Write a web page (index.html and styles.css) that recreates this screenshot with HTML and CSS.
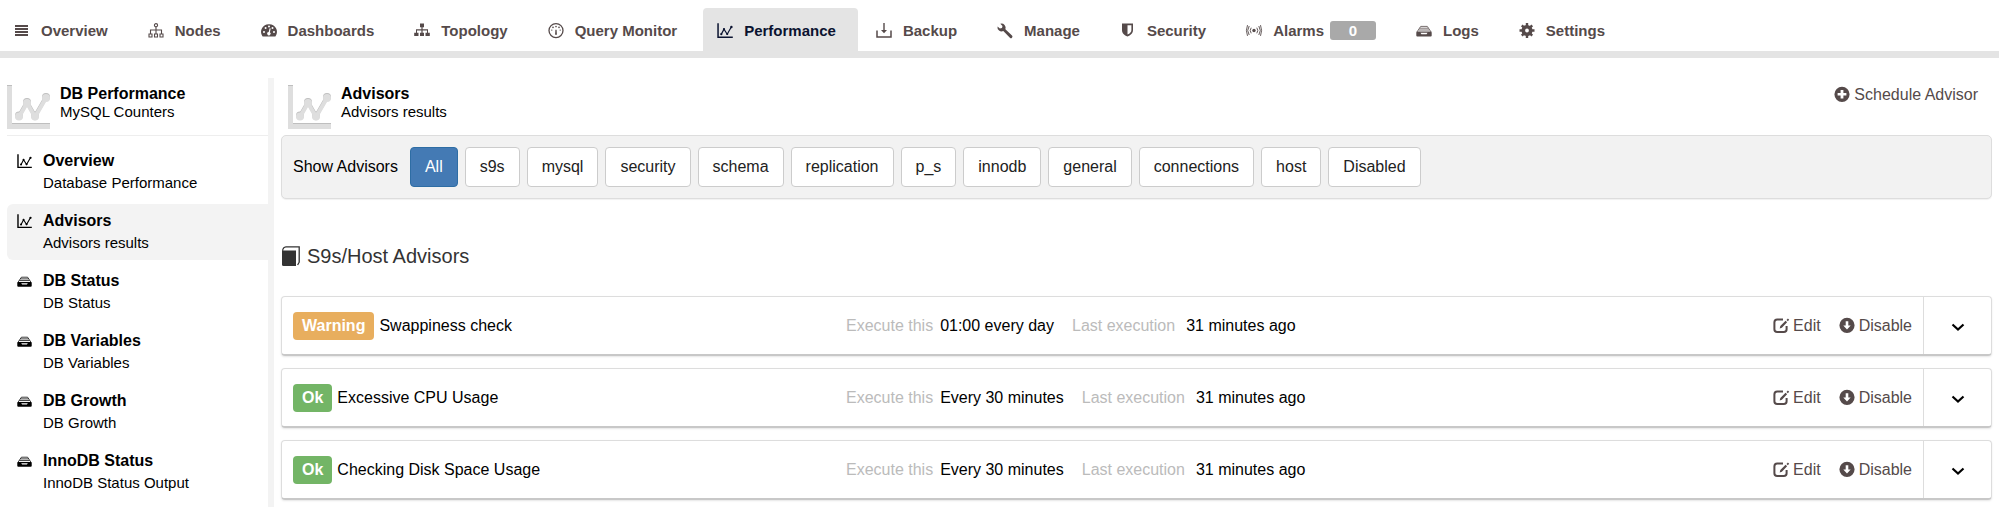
FILE: index.html
```html
<!DOCTYPE html>
<html lang="en">
<head>
    <meta charset="UTF-8">
    <meta name="viewport" content="width=device-width, initial-scale=1.0">
    <title>DB Performance - Advisors</title>
    <link rel="stylesheet" href="styles.css">
</head>
<body>
    <!-- Icon set -->
    <svg class="sprite" aria-hidden="true">
        <symbol id="i-bars" viewBox="0 0 16 16"><path d="M1 2h13v2H1zM1 5h13v2H1zM1 8h13v2H1zM1 11h13v2H1z"/></symbol>
        <symbol id="i-nodes" viewBox="0 0 16 16"><g fill="none" stroke="currentColor" stroke-width="1.1"><circle cx="8" cy="2.2" r="1.6"/><path d="M8 3.8v7M2.5 10.500V7h11v3.500M1 11h3v3H1zM6.500 11h3v3h-3zM12 11h3v3h-3z"/></g></symbol>
        <symbol id="i-dash" viewBox="0 0 16 16"><path fill-rule="evenodd" d="M8 1.200a7.600 7.600 0 0 1 6.700 11.700q-.3.500-.9.500H2.200q-.6 0-.9-.5A7.600 7.600 0 0 1 8 1.200zM3 7.900a1 1 0 1 0 0 2 1 1 0 0 0 0-2zM4.600 4.100a1 1 0 1 0 0 2 1 1 0 0 0 0-2zM8 2.600a1 1 0 1 0 0 2 1 1 0 0 0 0-2zM11.500 4.100a1 1 0 1 0 0 2 1 1 0 0 0 0-2zM13 7.900a1 1 0 1 0 0 2 1 1 0 0 0 0-2zM8.600 5.200 7.700 9a1.700 1.700 0 1 0 1.200.3l.8-3.800z"/></symbol>
        <symbol id="i-topology" viewBox="0 0 16 16"><path d="M6 .5h4v3.800H8.600v2H14v3.400h1.800V13H11.500V9.700H13V7.400H8.600v2.300H10V13H6V9.700h1.400V7.400H3v2.300h1.500V13H.2V9.700H2V6.300h5.400v-2H6z"/></symbol>
        <symbol id="i-query" viewBox="0 0 16 16"><circle cx="8" cy="7.600" r="7" fill="none" stroke="currentColor" stroke-width="1.300"/><path d="M7.400 6.800h1.200l.3 4.200a.9.9 0 0 1-1.800 0z"/><circle cx="8" cy="3.600" r=".8"/><circle cx="5" cy="4.400" r=".8"/><circle cx="11" cy="4.400" r=".8"/><circle cx="3.800" cy="7.100" r=".7"/><circle cx="12.200" cy="7.100" r=".7"/></symbol>
        <symbol id="i-chart" viewBox="0 0 16 16"><path d="M.3.200h1.500v13.300h14V15H.3z"/><path d="M4.200 11.400 7 6.200l3.200 5L14.300 4" fill="none" stroke="currentColor" stroke-width="1.200"/><circle cx="4.300" cy="11.200" r="1.100"/><circle cx="7" cy="6.200" r="1.100"/><circle cx="10.200" cy="11" r="1.100"/><circle cx="14.400" cy="4" r="1.200"/></symbol>
        <symbol id="i-chart-big" viewBox="0 0 43 44">
            <g fill="#bfbfbf" stroke="#bfbfbf"><path d="M0 0h5v38h38v6H0z" stroke="none"/><path d="M12 31 20 17l8 14L39 12" fill="none" stroke-width="4"/><g stroke="none"><circle cx="12" cy="30.500" r="4"/><circle cx="20" cy="17" r="4"/><circle cx="28" cy="30.500" r="4"/><circle cx="39" cy="12" r="4"/></g></g>
            <g fill="#dedede" stroke="#dedede"><path d="M0 1h5v38h38v5H0z" stroke="none"/><path d="M12 32 20 18l8 14L39 13" fill="none" stroke-width="4"/><g stroke="none"><circle cx="12" cy="31.500" r="4"/><circle cx="20" cy="18" r="4"/><circle cx="28" cy="31.500" r="4"/><circle cx="39" cy="13" r="4"/></g></g>
        </symbol>
        <symbol id="i-backup" viewBox="0 0 16 16"><path d="M1 7.500V14h14V7.500" fill="none" stroke="currentColor" stroke-width="1.500"/><path d="M7.300 0h1.400v7H11l-3 3.300L5 7h2.300z"/></symbol>
        <symbol id="i-wrench" viewBox="0 0 16 16"><path d="M.5 3.400 2.900 5.600 5 5 5.500 3 3.300.7A4.200 4.200 0 0 1 8.400 6.200l6.600 6.400a1.400 1.400 0 0 1-2.100 2.100L6.300 8A4.200 4.200 0 0 1 .5 3.400z"/></symbol>
        <symbol id="i-shield" viewBox="0 0 16 16"><path fill-rule="evenodd" d="M2 .500h11V7c0 3.500-2.500 5.300-5.500 6.500C4.300 12.300 2 10.500 2 7zM7.500 2.200v9.400c2.600-1.300 3.900-2.500 3.900-4.600V2.200z"/></symbol>
        <symbol id="i-alarm" viewBox="0 0 16 16"><circle cx="8" cy="7.500" r="1.700"/><path d="M5.200 4.700q-2 2.800 0 5.600M10.800 4.700q2 2.800 0 5.600M3.200 3q-3 4.500 0 9M12.800 3q3 4.500 0 9M1.500 2.100q-2.200 5.400 0 10.800M14.500 2.100q2.200 5.400 0 10.800" fill="none" stroke="currentColor" stroke-width=".9"/></symbol>
        <symbol id="i-drawer" viewBox="0 0 16 16"><path fill-rule="evenodd" d="M.3 9.700Q.3 8.900.9 8.500h14.200q.6.400.6 1.200V12.500q0 1-1 1H1.300q-1 0-1-1zM4.500 9.800l.9 1.500h5.200l.9-1.500z"/><path d="M4.700 3.400h6.600M3.700 5.200h8.600M2.600 7h10.800M4.700 3.400 1 8.900M11.300 3.400 15 8.900" fill="none" stroke="currentColor" stroke-width=".8"/></symbol>
        <symbol id="i-gear" viewBox="0 0 16 16"><circle cx="8" cy="7.500" r="3.700" fill="none" stroke="currentColor" stroke-width="3.600"/><path d="M8 0v3M8 12v3M.5 7.500h3M12.500 7.500h3M2.800 2.300l2 2M11.200 10.700l2 2M2.800 12.700l2-2M11.200 4.300l2-2" stroke="currentColor" stroke-width="2.400"/></symbol>
        <symbol id="i-plus" viewBox="0 0 16 16"><path fill-rule="evenodd" d="M8-.3a7.600 7.600 0 1 1 0 15.200A7.600 7.600 0 0 1 8-.3zM6.600 3v3h-3v2.600h3v3h2.800v-3h3V6h-3V3z"/></symbol>
        <symbol id="i-down" viewBox="0 0 16 16"><path fill-rule="evenodd" d="M8-.3a7.600 7.600 0 1 1 0 15.200A7.600 7.600 0 0 1 8-.3zM6.700 3.300v4.200H4.300L8 11.600l3.700-4.100H9.300V3.300z"/></symbol>
        <symbol id="i-edit" viewBox="0 0 16 16"><path d="M10 1.600H4.200Q1.400 1.600 1.400 4.400v6.800q0 2.800 2.800 2.800h6.600q2.800 0 2.800-2.800V8" fill="none" stroke="currentColor" stroke-width="2"/><path d="M6.700 10.600l.6-2.500 5.300-5.300 1.500 1.500L8.900 9.700zM13.500 1.900 14.900.4l1.300 1.400-1.400 1.400z"/></symbol>
        <symbol id="i-chevron" viewBox="0 0 16 16"><path d="M2.500 6.500 8 11.500l5.500-5" fill="none" stroke="currentColor" stroke-width="2.200"/></symbol>
        <symbol id="i-book" viewBox="0 0 20 20"><path d="M1 4.500h14V20H2.500Q1 20 1 18.500z"/><path d="M1.600 4.800Q2 1.200 5 .9h13.200v15.300L16.600 19" fill="none" stroke="currentColor" stroke-width="1.300"/><path d="M3.500 2.600h13.300V4H2.500z" fill="#fff"/></symbol>
    </svg>

    <nav class="top-nav">
        <a class="nav-item" href="#"><svg class="icon"><use href="#i-bars"/></svg>Overview</a>
        <a class="nav-item" href="#"><svg class="icon"><use href="#i-nodes"/></svg>Nodes</a>
        <a class="nav-item" href="#"><svg class="icon"><use href="#i-dash"/></svg>Dashboards</a>
        <a class="nav-item" href="#"><svg class="icon"><use href="#i-topology"/></svg>Topology</a>
        <a class="nav-item" href="#"><svg class="icon"><use href="#i-query"/></svg>Query Monitor</a>
        <a class="nav-item active" href="#"><svg class="icon"><use href="#i-chart"/></svg>Performance</a>
        <a class="nav-item" href="#"><svg class="icon"><use href="#i-backup"/></svg>Backup</a>
        <a class="nav-item" href="#"><svg class="icon"><use href="#i-wrench"/></svg>Manage</a>
        <a class="nav-item" href="#"><svg class="icon"><use href="#i-shield"/></svg>Security</a>
        <a class="nav-item" href="#"><svg class="icon"><use href="#i-alarm"/></svg>Alarms<span class="count">0</span></a>
        <a class="nav-item" href="#"><svg class="icon"><use href="#i-drawer"/></svg>Logs</a>
        <a class="nav-item" href="#"><svg class="icon"><use href="#i-gear"/></svg>Settings</a>
    </nav>

    <div class="page">
        <aside class="sidebar">
            <div class="section-header">
                <svg class="header-icon"><use href="#i-chart-big"/></svg>
                <div>
                    <div class="section-title">DB Performance</div>
                    <div class="section-sub">MySQL Counters</div>
                </div>
            </div>

            <div class="side-menu">
                <a class="side-item" href="#">
                    <svg class="side-icon"><use href="#i-chart"/></svg>
                    <div>
                        <div class="side-title">Overview</div>
                        <div class="side-sub">Database Performance</div>
                    </div>
                </a>
                <a class="side-item active" href="#">
                    <svg class="side-icon"><use href="#i-chart"/></svg>
                    <div>
                        <div class="side-title">Advisors</div>
                        <div class="side-sub">Advisors results</div>
                    </div>
                </a>
                <a class="side-item" href="#">
                    <svg class="side-icon"><use href="#i-drawer"/></svg>
                    <div>
                        <div class="side-title">DB Status</div>
                        <div class="side-sub">DB Status</div>
                    </div>
                </a>
                <a class="side-item" href="#">
                    <svg class="side-icon"><use href="#i-drawer"/></svg>
                    <div>
                        <div class="side-title">DB Variables</div>
                        <div class="side-sub">DB Variables</div>
                    </div>
                </a>
                <a class="side-item" href="#">
                    <svg class="side-icon"><use href="#i-drawer"/></svg>
                    <div>
                        <div class="side-title">DB Growth</div>
                        <div class="side-sub">DB Growth</div>
                    </div>
                </a>
                <a class="side-item" href="#">
                    <svg class="side-icon"><use href="#i-drawer"/></svg>
                    <div>
                        <div class="side-title">InnoDB Status</div>
                        <div class="side-sub">InnoDB Status Output</div>
                    </div>
                </a>
            </div>
        </aside>

        <main class="content">
            <div class="section-header">
                <svg class="header-icon"><use href="#i-chart-big"/></svg>
                <div>
                    <div class="section-title">Advisors</div>
                    <div class="section-sub">Advisors results</div>
                </div>
                <button class="link-btn schedule"><svg class="icon"><use href="#i-plus"/></svg>Schedule Advisor</button>
            </div>

            <div class="filters">
                <span class="filter-label">Show Advisors</span>
                <button class="filter-btn selected">All</button>
                <button class="filter-btn">s9s</button>
                <button class="filter-btn">mysql</button>
                <button class="filter-btn">security</button>
                <button class="filter-btn">schema</button>
                <button class="filter-btn">replication</button>
                <button class="filter-btn">p_s</button>
                <button class="filter-btn">innodb</button>
                <button class="filter-btn">general</button>
                <button class="filter-btn">connections</button>
                <button class="filter-btn">host</button>
                <button class="filter-btn">Disabled</button>
            </div>

            <h2 class="group-title"><svg class="book-icon"><use href="#i-book"/></svg>S9s/Host Advisors</h2>

            <div class="advisor">
                <div class="advisor-name"><span class="badge warning">Warning</span>Swappiness check</div>
                <div class="advisor-info">
                    <span class="muted">Execute this</span><span class="value">01:00 every day</span>
                    <span class="muted">Last execution</span><span class="last">31 minutes ago</span>
                </div>
                <div class="advisor-actions">
                    <button class="link-btn"><svg class="icon"><use href="#i-edit"/></svg>Edit</button>
                    <button class="link-btn"><svg class="icon"><use href="#i-down"/></svg>Disable</button>
                </div>
                <button class="expand" aria-label="Expand"><svg class="icon"><use href="#i-chevron"/></svg></button>
            </div>

            <div class="advisor">
                <div class="advisor-name"><span class="badge ok">Ok</span>Excessive CPU Usage</div>
                <div class="advisor-info">
                    <span class="muted">Execute this</span><span class="value">Every 30 minutes</span>
                    <span class="muted">Last execution</span><span class="last">31 minutes ago</span>
                </div>
                <div class="advisor-actions">
                    <button class="link-btn"><svg class="icon"><use href="#i-edit"/></svg>Edit</button>
                    <button class="link-btn"><svg class="icon"><use href="#i-down"/></svg>Disable</button>
                </div>
                <button class="expand" aria-label="Expand"><svg class="icon"><use href="#i-chevron"/></svg></button>
            </div>

            <div class="advisor">
                <div class="advisor-name"><span class="badge ok">Ok</span>Checking Disk Space Usage</div>
                <div class="advisor-info">
                    <span class="muted">Execute this</span><span class="value">Every 30 minutes</span>
                    <span class="muted">Last execution</span><span class="last">31 minutes ago</span>
                </div>
                <div class="advisor-actions">
                    <button class="link-btn"><svg class="icon"><use href="#i-edit"/></svg>Edit</button>
                    <button class="link-btn"><svg class="icon"><use href="#i-down"/></svg>Disable</button>
                </div>
                <button class="expand" aria-label="Expand"><svg class="icon"><use href="#i-chevron"/></svg></button>
            </div>
        </main>
    </div>
</body>
</html>
```
FILE: styles.css
```css
* {
    margin: 0;
    padding: 0;
    box-sizing: border-box;
}

body {
    display: flex;
    flex-direction: column;
    min-height: 100vh;
    background-color: #fff;
    color: #000;
    font-family: "Liberation Sans", Arial, Helvetica, sans-serif;
    font-size: 16px;
    line-height: 20px;
}

a {
    color: inherit;
    text-decoration: none;
}

button {
    font: inherit;
    cursor: pointer;
}

svg {
    flex: none;
    fill: currentColor;
    overflow: visible;
}

symbol {
    overflow: visible;
}

.sprite {
    display: none;
}

.icon {
    width: 16px;
    height: 16px;
}

/* Top navigation */
.top-nav {
    display: flex;
    gap: 4px;
    padding-top: 8px;
    border-bottom: 7px solid #e4e4e4;
}

.nav-item {
    display: flex;
    align-items: center;
    height: 43px;
    padding: 2px 22px 0 14px;
    border-radius: 4px 4px 0 0;
    color: #554a4a;
    font-size: 15px;
    font-weight: bold;
    white-space: nowrap;
}

.nav-item .icon {
    margin-right: 11px;
}

.nav-item.active {
    background-color: #e4e4e4;
    color: #0b1330;
}

.count {
    width: 46px;
    margin-left: 6px;
    border-radius: 3px;
    background-color: #a9a9a9;
    color: #fff;
    line-height: 19px;
    text-align: center;
}

/* Page columns */
.page {
    display: flex;
    flex: 1;
    padding: 20px 7px 0;
}

.sidebar {
    flex: none;
    width: 267px;
    border-right: 6px solid #f3f3f3;
}

.content {
    flex: 1;
    margin-left: 7px;
}

.section-header {
    display: flex;
    height: 57px;
    padding-top: 7px;
}

.sidebar .section-header {
    height: 58px;
    border-bottom: 1px solid #eee;
}

.content .section-header {
    padding-left: 7px;
}

.header-icon {
    width: 43px;
    height: 44px;
    margin-right: 10px;
}

.section-title {
    font-weight: bold;
    line-height: 18px;
}

.section-sub {
    font-size: 15px;
    line-height: 18px;
}

/* Sidebar menu */
.side-menu {
    display: flex;
    flex-direction: column;
    gap: 4px;
    padding-top: 8px;
}

.side-item {
    display: flex;
    height: 56px;
    padding: 6px 0 0 10px;
    border-radius: 6px 0 0 6px;
}

.side-item.active {
    background-color: #f3f3f3;
}

.side-icon {
    width: 15px;
    height: 15px;
    margin: 4px 11px 0 0;
}

.side-title {
    font-weight: bold;
    line-height: 22px;
}

.side-sub {
    font-size: 15px;
    line-height: 22px;
}

/* Buttons */
.link-btn {
    display: flex;
    align-items: center;
    gap: 4px;
    border: none;
    background: none;
    color: #554a4a;
}

.schedule {
    align-self: flex-start;
    margin: 0 14px 0 auto;
}

.filters {
    display: flex;
    align-items: center;
    gap: 7px;
    padding: 11px;
    border: 1px solid #ddd;
    border-radius: 5px;
    background-color: #f2f2f2;
    box-shadow: 0 1px 1px rgba(0, 0, 0, 0.06);
}

.filter-label {
    margin-right: 5px;
}

.filter-btn {
    height: 40px;
    padding: 0 14px;
    border: 1px solid #ccc;
    border-radius: 4px;
    background-color: #fff;
    color: #222;
}

.filter-btn.selected {
    border-color: #2e6da4;
    background-color: #447ab4;
    color: #fff;
}

/* Advisor list */
.group-title {
    display: flex;
    align-items: center;
    gap: 6px;
    margin: 44px 0 27px;
    color: #333;
    font-size: 20px;
    font-weight: normal;
    line-height: 26px;
}

.book-icon {
    width: 20px;
    height: 20px;
}

.advisor {
    display: flex;
    align-items: center;
    height: 60px;
    margin-bottom: 12px;
    border: 1px solid #ddd;
    border-bottom: 2px solid #c8c8c8;
    border-radius: 4px;
    box-shadow: 0 1px 2px rgba(0, 0, 0, 0.1);
}

.advisor-name {
    display: flex;
    flex: 0 0 33%;
    align-items: center;
    gap: 5px;
    padding-left: 11px;
}

.badge {
    padding: 4px 9px;
    border-radius: 4px;
    color: #fff;
    font-weight: bold;
}

.badge.warning {
    background-color: #e8ae5e;
}

.badge.ok {
    background-color: #73b566;
}

.advisor-info {
    display: flex;
    flex: 1;
    white-space: nowrap;
}

.muted {
    color: #bbb;
}

.value {
    margin: 0 18px 0 7px;
}

.last {
    margin-left: 11px;
}

.advisor-actions {
    display: flex;
    gap: 18px;
    padding-right: 11px;
}

.expand {
    display: flex;
    align-items: center;
    justify-content: center;
    align-self: stretch;
    width: 68px;
    border: none;
    border-left: 1px solid #ddd;
    background: none;
    color: #000;
}
```
